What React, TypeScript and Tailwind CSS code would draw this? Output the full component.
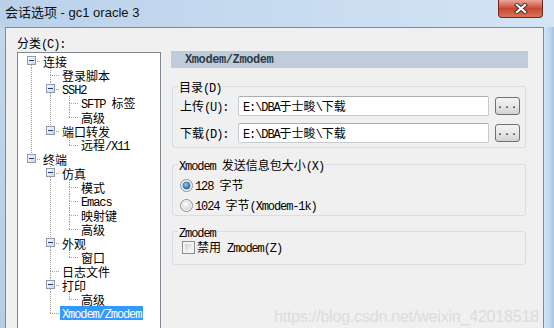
import type { ReactNode } from "react";

// Session options dialog (SecureCRT style, Win7 aero frame)

const MONO = "font-['Liberation_Mono',monospace] text-[12px] leading-[14px] tracking-[-1.1px]";
const CJK = "font-['Noto_Sans_CJK_SC',sans-serif] text-[12px] leading-[14px]";

function Txt({ s, className }: { s: string; className?: string }) {
  const parts = s.split(/([\x00-\x7f]+)/).filter(Boolean);
  return (
    <span className={"leading-[14px] " + (className ?? "")}>
      {parts.map((p, i) =>
        /^[\x00-\x7f]+$/.test(p) ? (
          <span key={i} className={MONO}>
            {p}
          </span>
        ) : (
          <span key={i} className={CJK}>
            {p}
          </span>
        )
      )}
    </span>
  );
}

type Node = { label: string; level: number; box?: boolean; selected?: boolean };

const tree: Node[] = [
  { label: "连接", level: 0, box: true },
  { label: "登录脚本", level: 1 },
  { label: "SSH2", level: 1, box: true },
  { label: "SFTP 标签", level: 2 },
  { label: "高级", level: 2 },
  { label: "端口转发", level: 1, box: true },
  { label: "远程/X11", level: 2 },
  { label: "终端", level: 0, box: true },
  { label: "仿真", level: 1, box: true },
  { label: "模式", level: 2 },
  { label: "Emacs", level: 2 },
  { label: "映射键", level: 2 },
  { label: "高级", level: 2 },
  { label: "外观", level: 1, box: true },
  { label: "窗口", level: 2 },
  { label: "日志文件", level: 1 },
  { label: "打印", level: 1, box: true },
  { label: "高级", level: 2 },
  { label: "Xmodem/Zmodem", level: 1, selected: true },
];

// does a later sibling exist at this level (before the branch closes)?
function continues(i: number, level: number) {
  for (let j = i + 1; j < tree.length; j++) {
    if (tree[j].level < level) return false;
    if (tree[j].level === level) return true;
  }
  return false;
}

const CELL = 19;
const ROW = 14;

function dotsV(x: number, y0: number, y1: number, key: string) {
  const out: ReactNode[] = [];
  for (let y = y0; y < y1; y += 2) out.push(<rect key={key + y} x={x} y={y} width={1} height={1} fill="#a0a0a0" />);
  return out;
}

function dotsH(y: number, x0: number, x1: number, key: string) {
  const out: ReactNode[] = [];
  for (let x = x0; x < x1; x += 2) out.push(<rect key={key + x} x={x} y={y} width={1} height={1} fill="#a0a0a0" />);
  return out;
}

function Connector({ i, node }: { i: number; node: Node }) {
  const w = CELL * (node.level + 1);
  const items: ReactNode[] = [];
  for (let l = 0; l < node.level; l++) {
    if (continues(i, l)) items.push(...dotsV(l * CELL + 9, 0, ROW, "a" + l + "-"));
  }
  const cx = node.level * CELL + 9;
  if (i > 0) items.push(...dotsV(cx, 0, 7, "t"));
  if (continues(i, node.level)) items.push(...dotsV(cx, 7, ROW, "b"));
  items.push(...dotsH(7, cx, w - 1, "h"));
  return (
    <svg width={w} height={ROW} className="shrink-0">
      {items}
      {node.box && (
        <g>
          <rect x={cx - 4} y={3} width={8} height={8} fill="url(#bx)" stroke="#8c9bad" strokeWidth={1} transform="translate(0.5 -0.5)" />
          <rect x={cx - 2} y={6} width={5} height={1} fill="#1f3c88" />
        </g>
      )}
    </svg>
  );
}

function Radio({ checked }: { checked?: boolean }) {
  return (
    <svg width={13} height={13} className="shrink-0">
      <defs>
        <radialGradient id={checked ? "rOn" : "rOff"} cx="0.4" cy="0.35" r="0.7">
          <stop offset="0" stopColor={checked ? "#7fd3ff" : "#ffffff"} />
          <stop offset="1" stopColor={checked ? "#1b5f9e" : "#d6d6d6"} />
        </radialGradient>
      </defs>
      <circle cx={6.5} cy={6.5} r={6} fill="#f4f4f4" stroke="#8e8f8f" />
      <circle cx={6.5} cy={6.5} r={4.5} fill="#e2e2e2" />
      {checked ? <circle cx={6.5} cy={6.5} r={3.5} fill="url(#rOn)" stroke="#2b5f8c" strokeWidth={0.6} /> : <circle cx={6.5} cy={6.5} r={4} fill="url(#rOff)" />}
    </svg>
  );
}

function Group({ legend, className, children }: { legend: string; className?: string; children: ReactNode }) {
  return (
    <fieldset className={"ml-[1px] w-[354px] border border-[#d5dfe5] rounded-[3px] pl-[7px] pr-[5px] " + (className ?? "")}>
      <legend className="-ml-[2px] px-[1px] leading-[14px] h-[14px]">
        <Txt s={legend} className="text-[#000]" />
      </legend>
      {children}
    </fieldset>
  );
}

function PathRow({ label, className }: { label: string; className?: string }) {
  return (
    <div className={"flex items-center h-[20px] " + (className ?? "")}>
      <div className="w-[58px] leading-[14px]">
        <Txt s={label} />
      </div>
      <div className="w-[251px] h-[20px] bg-white border border-[#c5c9d0] border-t-[#abadb3] rounded-[2px] flex items-center pl-[4px] leading-[14px]">
        <Txt s="E:\DBA于士畯\下载" />
      </div>
      <button className="ml-[6px] w-[25px] h-[18px] border border-[#707070] rounded-[3px] bg-gradient-to-b from-[#f3f3f3] via-[#e8e8e8] to-[#d2d2d2] flex items-end justify-center pb-[3px]">
        <span className="font-['Liberation_Mono',monospace] text-[10px] leading-[10px] tracking-[1px] text-black">...</span>
      </button>
    </div>
  );
}

export default function App() {
  return (
    <div className="w-[554px] h-[328px] overflow-hidden relative flex flex-col bg-gradient-to-r from-[#bad1ea] via-[#c7dbf0] to-[#d4e4f5]">
      <svg width={0} height={0} className="absolute">
        <defs>
          <linearGradient id="bx" x1="0" y1="0" x2="1" y2="1">
            <stop offset="0" stopColor="#ffffff" />
            <stop offset="1" stopColor="#cdd4de" />
          </linearGradient>
        </defs>
      </svg>

      {/* title bar */}
      <div className="h-[27px] flex shrink-0">
        <div className="pl-[5px] pt-[5px] font-['Liberation_Sans','Noto_Sans_CJK_SC',sans-serif] text-[13px] leading-[16px] text-[#111]">
          会话选项 - gc1 oracle 3
        </div>
        <div className="ml-auto mr-[11px] w-[45px] h-[18px] rounded-b-[4px] border border-t-0 border-[#6e2a22] bg-gradient-to-b from-[#e9a598] via-[#c9462f] to-[#d8735a] flex items-center justify-center">
          <svg width={14} height={11} viewBox="0 0 14 11">
            <path d="M3 2 L11 9 M11 2 L3 9" stroke="#3a3a3a" strokeWidth={4.2} strokeLinecap="square" />
            <path d="M3 2 L11 9 M11 2 L3 9" stroke="#ffffff" strokeWidth={2.2} strokeLinecap="square" />
          </svg>
        </div>
      </div>

      {/* body */}
      <div className="flex flex-1">
        <div className="w-[5px] bg-gradient-to-b from-[#c3d6ec] to-[#b7cde6]" />
        <div className="flex-1 border-l border-t border-r border-[#7d8a98] bg-[#f0f0f0] flex gap-[10px] pl-[11px] pt-[7px]">
          {/* left column */}
          <div className="w-[144px] flex flex-col shrink-0">
            <div className="h-[14px] leading-[14px]">
              <Txt s="分类(C):" />
            </div>
            <div className="mt-[3px] h-[300px] bg-white border border-[#828790] pt-[1px] pl-[4px]">
              {tree.map((n, i) => (
                <div key={i} className="flex h-[14px] items-center">
                  <Connector i={i} node={n} />
                  <span className={"px-[2px] whitespace-nowrap h-[14px] flex items-center " + (n.selected ? "bg-[#3399ff] text-white" : "text-black")}>
                    <Txt s={n.label} />
                  </span>
                </div>
              ))}
            </div>
          </div>

          {/* right column */}
          <div className="w-[357px] pt-[16px] shrink-0">
            <div className="h-[17px] bg-[#bfccd9] pl-[14px] flex items-center">
              <span className="font-['Liberation_Mono',monospace] font-bold text-[12px] tracking-[-0.4px] text-[#2e3a4b]">Xmodem/Zmodem</span>
            </div>

            <Group legend="目录(D)" className="mt-[11px] pt-[3px] pb-[4px]">
              <PathRow label="上传(U):" />
              <PathRow label="下载(D):" className="mt-[7px]" />
            </Group>

            <Group legend="Xmodem 发送信息包大小(X)" className="mt-[9px] pt-[4px]">
              <div className="flex items-center gap-[2px] h-[20px]">
                <Radio checked />
                <Txt s="128 字节" />
              </div>
              <div className="flex items-center gap-[2px] h-[20px]">
                <Radio />
                <Txt s="1024 字节(Xmodem-1k)" />
              </div>
            </Group>

            <Group legend="Zmodem" className="mt-[8px] pt-[1px] pb-[9px]">
              <div className="flex items-center gap-[2px] h-[16px] pl-[2px]">
                <div className="w-[13px] h-[13px] border border-[#8e8f8f] bg-[#f4f4f4] p-[2px] shrink-0">
                  <div className="w-full h-full bg-gradient-to-br from-[#d2d2d2] to-[#fafafa]" />
                </div>
                <Txt s="禁用 Zmodem(Z)" />
              </div>
            </Group>
          </div>
        </div>
        <div className="w-[10px] bg-gradient-to-r from-[#d3e3f4] via-[#c2d8ef] to-[#a8c4e4]" />
      </div>

      {/* watermark */}
      <div className="absolute left-[274px] top-[306px] font-['Liberation_Sans',sans-serif] text-[16px] tracking-[-0.2px] leading-[22px] text-[#dcdcdc] whitespace-nowrap">
        https://blog.csdn.net/weixin_42018518
      </div>
    </div>
  );
}
